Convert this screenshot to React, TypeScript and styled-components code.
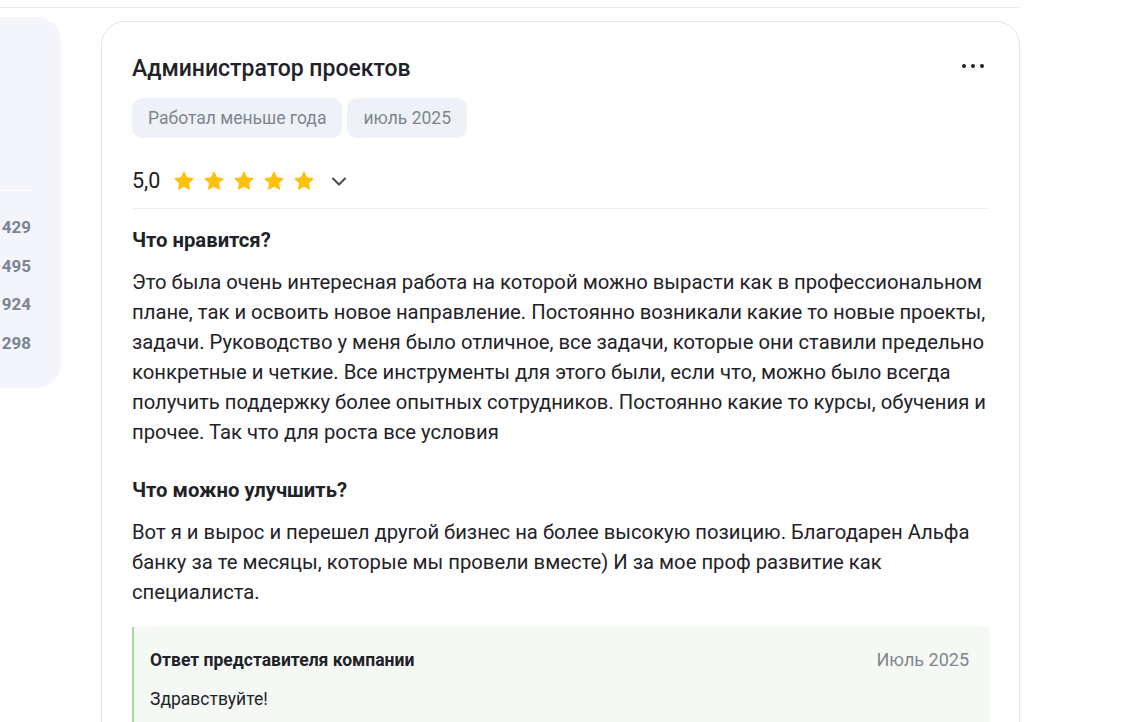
import React from "react";
import styled, { createGlobalStyle } from "styled-components";

const GlobalStyle = createGlobalStyle`
  html, body { margin: 0; padding: 0; background: #ffffff; overflow: hidden; }
  body {
    font-family: Roboto, "Noto Sans", "Liberation Sans", Arial, sans-serif;
    color: #1f2229;
  }
  * { box-sizing: border-box; }
`;

const Page = styled.div`
  width: 1020px;
`;

const TopBar = styled.div`
  height: 8px;
  border-bottom: 1px solid #e9ebef;
`;

const Layout = styled.div`
  display: flex;
  align-items: flex-start;
  gap: 40px;
`;

const Sidebar = styled.aside`
  flex: 0 0 61px;
  margin-top: 9px;
  background: #f3f5fa;
  border-radius: 0 24px 24px 0;
  padding: 0 30px 33px 0;
`;

const SidebarTop = styled.div`
  height: 174px;
  border-bottom: 1px solid #ffffff;
`;

const StatList = styled.ul`
  list-style: none;
  margin: 0;
  padding: 24px 0 0;
  display: flex;
  flex-direction: column;
  gap: 14.67px;
`;

const Stat = styled.li`
  text-align: right;
  font-size: 17px;
  font-weight: 700;
  line-height: 24px;
  color: #7b8494;
`;

const Card = styled.article`
  flex: 1;
  margin-top: 13px;
  min-height: 820px;
  background: #ffffff;
  border: 1px solid #dfe3eb;
  border-radius: 24px;
  padding: 32px 30px 40px 30px;
`;

const CardHeader = styled.div`
  display: flex;
  justify-content: space-between;
  align-items: flex-start;
`;

const Title = styled.h2`
  margin: 0;
  font-size: 23px;
  line-height: 30px;
  font-weight: 500;
  color: #1f2229;
`;

const MoreButton = styled.button`
  height: 24px;
  padding: 0 5px 0 3px;
  border: 0;
  background: none;
  display: flex;
  align-items: center;
  gap: 5px;
  cursor: pointer;
`;

const Dot = styled.span`
  width: 4px;
  height: 4px;
  border-radius: 50%;
  background: #1f2229;
`;

const Tags = styled.div`
  display: flex;
  gap: 5px;
  margin-top: 14px;
`;

const Tag = styled.span`
  height: 40px;
  padding: 0 16px;
  display: inline-flex;
  align-items: center;
  border-radius: 10px;
  background: #eef1f7;
  color: #7e8592;
  font-size: 17.5px;
`;

const RatingSection = styled.div`
  margin-top: 28px;
  padding-bottom: 12px;
  border-bottom: 1px solid #eef0f5;
`;

const RatingRow = styled.div`
  height: 30px;
  display: flex;
  align-items: center;
`;

const Score = styled.span`
  font-size: 21.5px;
  line-height: 30px;
  color: #1a1c20;
  margin-right: 12px;
`;

const Stars = styled.div`
  display: flex;
  gap: 6px;
`;

const ChevronButton = styled.button`
  width: 24px;
  height: 24px;
  margin-left: 11px;
  padding: 0;
  border: 0;
  background: none;
  display: flex;
  align-items: center;
  justify-content: center;
  cursor: pointer;
`;

const SectionTitle = styled.h3<{ $first?: boolean }>`
  margin: ${(p) => (p.$first ? "16px" : "28px")} 0 0;
  font-size: 20.25px;
  line-height: 30px;
  font-weight: 700;
  color: #1f2229;
`;

const Paragraph = styled.p`
  margin: 12px 0 0;
  font-size: 20.25px;
  line-height: 30px;
  color: #1f2229;
`;

const Reply = styled.section`
  margin-top: 20px;
  background: #f4f9f3;
  border-left: 2px solid #a8d8a0;
  padding: 21px 20px 40px 16px;
`;

const ReplyHeader = styled.div`
  display: flex;
  justify-content: space-between;
  align-items: baseline;
`;

const ReplyTitle = styled.h4`
  margin: 0;
  font-size: 17.5px;
  line-height: 24px;
  font-weight: 700;
  color: #1f2229;
`;

const ReplyDate = styled.span`
  font-size: 18px;
  line-height: 24px;
  color: #80868f;
`;

const ReplyText = styled.p`
  margin: 15px 0 0;
  font-size: 17.5px;
  line-height: 24px;
  color: #1f2229;
`;

const Star = () => (
  <svg width="24" height="24" viewBox="0 0 24 24" aria-hidden="true">
    <path
      d="M12 2l3.09 6.26L22 9.27l-5 4.87 1.18 6.88L12 17.77l-6.18 3.25L7 14.14 2 9.27l6.91-1.01L12 2z"
      fill="#ffc107"
    />
  </svg>
);

const Chevron = () => (
  <svg width="24" height="24" viewBox="0 0 24 24" aria-hidden="true">
    <path d="M6 9.5l6 6 6-6" fill="none" stroke="#4a4a4a" strokeWidth="2" strokeLinecap="round" strokeLinejoin="round" />
  </svg>
);

const stats = ["429", "495", "924", "298"];

export default function App() {
  return (
    <>
      <GlobalStyle />
      <Page>
        <TopBar />
        <Layout>
          <Sidebar>
            <SidebarTop />
            <StatList>
              {stats.map((s) => (
                <Stat key={s}>{s}</Stat>
              ))}
            </StatList>
          </Sidebar>
          <Card>
            <CardHeader>
              <Title>Администратор проектов</Title>
              <MoreButton aria-label="Ещё">
                <Dot />
                <Dot />
                <Dot />
              </MoreButton>
            </CardHeader>
            <Tags>
              <Tag>Работал меньше года</Tag>
              <Tag>июль 2025</Tag>
            </Tags>
            <RatingSection>
              <RatingRow>
                <Score>5,0</Score>
                <Stars>
                  {[0, 1, 2, 3, 4].map((i) => (
                    <Star key={i} />
                  ))}
                </Stars>
                <ChevronButton aria-label="Подробнее">
                  <Chevron />
                </ChevronButton>
              </RatingRow>
            </RatingSection>
            <SectionTitle $first>Что нравится?</SectionTitle>
            <Paragraph>
              Это была очень интересная работа на которой можно вырасти как в профессиональном плане, так и освоить
              новое направление. Постоянно возникали какие то новые проекты, задачи. Руководство у меня было отличное,
              все задачи, которые они ставили предельно конкретные и четкие. Все инструменты для этого были, если что,
              можно было всегда получить поддержку более опытных сотрудников. Постоянно какие то курсы, обучения и
              прочее. Так что для роста все условия
            </Paragraph>
            <SectionTitle>Что можно улучшить?</SectionTitle>
            <Paragraph>
              Вот я и вырос и перешел другой бизнес на более высокую позицию. Благодарен Альфа банку за те месяцы,
              которые мы провели вместе) И за мое проф развитие как специалиста.
            </Paragraph>
            <Reply>
              <ReplyHeader>
                <ReplyTitle>Ответ представителя компании</ReplyTitle>
                <ReplyDate>Июль 2025</ReplyDate>
              </ReplyHeader>
              <ReplyText>Здравствуйте!</ReplyText>
            </Reply>
          </Card>
        </Layout>
      </Page>
    </>
  );
}
